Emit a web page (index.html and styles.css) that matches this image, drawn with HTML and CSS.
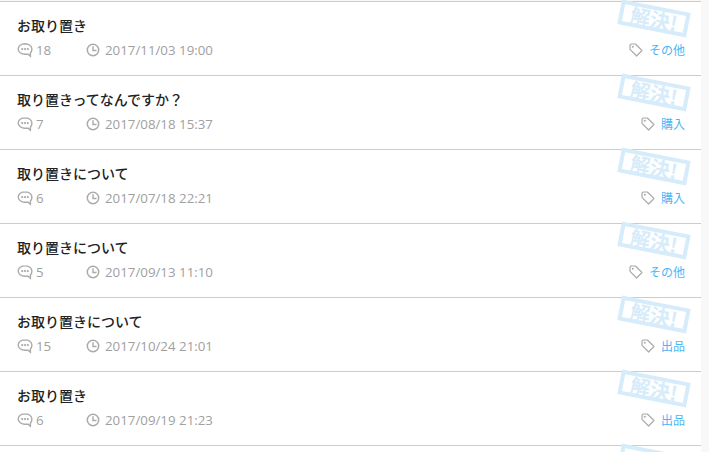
FILE: index.html
```html
<!DOCTYPE html>
<html lang="ja">
<head>
    <meta charset="UTF-8" />
    <title>取り置き</title>
    <link rel="stylesheet" href="styles.css">
</head>
<body>
    <svg class="icon-defs" width="0" height="0">
        <symbol id="iconComment" viewBox="0 0 16 16">
            <path d="M8 1.800C4.200 1.800 1.200 4 1.200 7S4.200 12.200 8 12.200h3l2.400 2v-3.100c1-.9 1.500-2.400 1.500-4.100C14.900 4 11.800 1.800 8 1.800z" fill="none" stroke="currentColor" stroke-width="1.400"/>
            <circle cx="5.200" cy="7.100" r="1.100" fill="currentColor"/>
            <circle cx="8" cy="7.100" r="1.100" fill="currentColor"/>
            <circle cx="10.800" cy="7.100" r="1.100" fill="currentColor"/>
        </symbol>
        <symbol id="iconClock" viewBox="0 0 14 14">
            <circle cx="7" cy="7" r="5.700" fill="none" stroke="currentColor" stroke-width="1.500"/>
            <path d="M7 3.200V7.500H10.500" fill="none" stroke="currentColor" stroke-width="1.400"/>
        </symbol>
        <symbol id="iconTag" viewBox="0 0 14 14">
            <path d="M1 2.200 2.200 1H6.400L13 7.500 7.600 13 1 6.400z" fill="none" stroke="currentColor" stroke-width="1.200" stroke-linejoin="round"/>
            <circle cx="3.800" cy="3.800" r="1" fill="currentColor"/>
        </symbol>
    </svg>

    <ul class="question-list">
        <li class="question">
            <div class="stamp"><span>解決!</span></div>
            <div class="question-title">お取り置き</div>
            <div class="question-meta">
                <span class="meta-count"><svg class="icon icon-comment"><use href="#iconComment"/></svg>18</span>
                <span class="meta-date"><svg class="icon icon-clock"><use href="#iconClock"/></svg>2017/11/03 19:00</span>
                <span class="meta-tag"><svg class="icon icon-tag"><use href="#iconTag"/></svg><a href="#">その他</a></span>
            </div>
        </li>
        <li class="question">
            <div class="stamp"><span>解決!</span></div>
            <div class="question-title">取り置きってなんですか？</div>
            <div class="question-meta">
                <span class="meta-count"><svg class="icon icon-comment"><use href="#iconComment"/></svg>7</span>
                <span class="meta-date"><svg class="icon icon-clock"><use href="#iconClock"/></svg>2017/08/18 15:37</span>
                <span class="meta-tag"><svg class="icon icon-tag"><use href="#iconTag"/></svg><a href="#">購入</a></span>
            </div>
        </li>
        <li class="question">
            <div class="stamp"><span>解決!</span></div>
            <div class="question-title">取り置きについて</div>
            <div class="question-meta">
                <span class="meta-count"><svg class="icon icon-comment"><use href="#iconComment"/></svg>6</span>
                <span class="meta-date"><svg class="icon icon-clock"><use href="#iconClock"/></svg>2017/07/18 22:21</span>
                <span class="meta-tag"><svg class="icon icon-tag"><use href="#iconTag"/></svg><a href="#">購入</a></span>
            </div>
        </li>
        <li class="question">
            <div class="stamp"><span>解決!</span></div>
            <div class="question-title">取り置きについて</div>
            <div class="question-meta">
                <span class="meta-count"><svg class="icon icon-comment"><use href="#iconComment"/></svg>5</span>
                <span class="meta-date"><svg class="icon icon-clock"><use href="#iconClock"/></svg>2017/09/13 11:10</span>
                <span class="meta-tag"><svg class="icon icon-tag"><use href="#iconTag"/></svg><a href="#">その他</a></span>
            </div>
        </li>
        <li class="question">
            <div class="stamp"><span>解決!</span></div>
            <div class="question-title">お取り置きについて</div>
            <div class="question-meta">
                <span class="meta-count"><svg class="icon icon-comment"><use href="#iconComment"/></svg>15</span>
                <span class="meta-date"><svg class="icon icon-clock"><use href="#iconClock"/></svg>2017/10/24 21:01</span>
                <span class="meta-tag"><svg class="icon icon-tag"><use href="#iconTag"/></svg><a href="#">出品</a></span>
            </div>
        </li>
        <li class="question">
            <div class="stamp"><span>解決!</span></div>
            <div class="question-title">お取り置き</div>
            <div class="question-meta">
                <span class="meta-count"><svg class="icon icon-comment"><use href="#iconComment"/></svg>6</span>
                <span class="meta-date"><svg class="icon icon-clock"><use href="#iconClock"/></svg>2017/09/19 21:23</span>
                <span class="meta-tag"><svg class="icon icon-tag"><use href="#iconTag"/></svg><a href="#">出品</a></span>
            </div>
        </li>
        <li class="question question-last">
            <div class="stamp"></div>
        </li>
    </ul>
</body>
</html>
```

FILE: styles.css
```css
html {
    overflow: hidden;
}
body {
    margin: 0;
    height: 452px;
    overflow: hidden;
    background-color: #f8f8f8;
    font-family: "Noto Sans CJK JP", "Liberation Sans", sans-serif;
}
.icon-defs {
    display: block;
}
.question-list {
    list-style: none;
    margin: 0;
    padding: 0;
    width: 701px;
    background-color: #fff;
}
.question {
    position: relative;
    box-sizing: border-box;
    height: 74px;
    padding: 13px 16px 0 17px;
    border-top: 1px solid #ccc;
}
.question:first-child {
    margin-top: 1px;
}
.question-last {
    height: 6px;
}
.question-title {
    height: 21px;
    font-size: 14px;
    line-height: 21px;
    font-weight: 500;
    color: #222;
}
.question-meta {
    display: flex;
    align-items: center;
    margin-top: 4px;
    height: 20px;
    font-family: "Open Sans", "Noto Sans CJK JP", sans-serif;
    font-size: 13.3px;
    color: #a0a0a0;
}
.meta-count {
    display: flex;
    align-items: center;
    width: 69px;
}
.meta-date {
    display: flex;
    align-items: center;
}
.meta-tag {
    display: flex;
    align-items: center;
    margin-left: auto;
    font-family: "Noto Sans CJK JP", sans-serif;
    font-size: 12px;
}
.meta-tag a {
    display: block;
    margin-bottom: 1px;
    color: #4db5f5;
    text-decoration: none;
}
.icon {
    flex: none;
    color: #aaa;
}
.icon-comment {
    width: 16px;
    height: 16px;
    margin-right: 3px;
}
.icon-clock {
    width: 14px;
    height: 14px;
    margin-right: 5px;
}
.icon-tag {
    width: 14px;
    height: 14px;
    margin-right: 6px;
}
.stamp {
    position: absolute;
    top: 4px;
    left: 619px;
    box-sizing: border-box;
    width: 70px;
    height: 25px;
    border: 4px solid #d6ecfa;
    transform: rotate(11deg);
    display: flex;
    align-items: center;
    justify-content: center;
    font-size: 20px;
    line-height: 17px;
    font-weight: 700;
    color: #d6ecfa;
    white-space: nowrap;
}
```
